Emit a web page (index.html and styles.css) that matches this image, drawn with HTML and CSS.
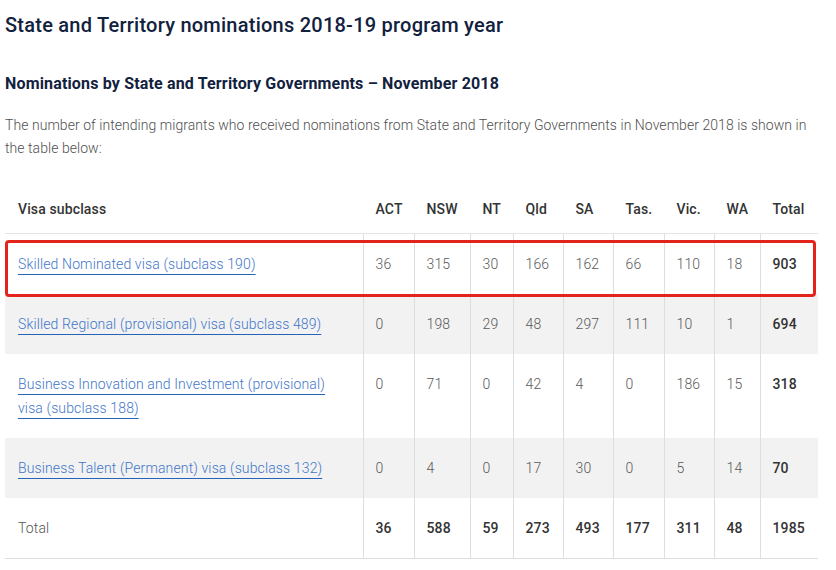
FILE: index.html
```html
<!DOCTYPE html>
<html lang="en">
<head>
<meta charset="utf-8">
<title>State and Territory nominations 2018-19 program year</title>
<link rel="stylesheet" href="styles.css">
</head>
<body>
<main class="page">
  <h1 class="title">State and Territory nominations 2018-19 program year</h1>
  <h2 class="subtitle">Nominations by State and Territory Governments – November 2018</h2>
  <p class="intro">The number of intending migrants who received nominations from State and Territory Governments in November 2018 is shown in the table below:</p>
  <div class="table-wrap">
    <table class="data">
      <colgroup>
        <col class="c-visa"><col class="c-act"><col class="c-nsw"><col class="c-nt"><col class="c-qld"><col class="c-sa"><col class="c-tas"><col class="c-vic"><col class="c-wa"><col class="c-total">
      </colgroup>
      <thead>
        <tr>
          <th>Visa subclass</th><th>ACT</th><th>NSW</th><th>NT</th><th>Qld</th><th>SA</th><th>Tas.</th><th>Vic.</th><th>WA</th><th>Total</th>
        </tr>
      </thead>
      <tbody>
        <tr>
          <td><a href="#">Skilled Nominated visa (subclass 190)</a></td>
          <td>36</td><td>315</td><td>30</td><td>166</td><td>162</td><td>66</td><td>110</td><td>18</td><td class="strong">903</td>
        </tr>
        <tr class="alt">
          <td><a href="#">Skilled Regional (provisional) visa (subclass 489)</a></td>
          <td>0</td><td>198</td><td>29</td><td>48</td><td>297</td><td>111</td><td>10</td><td>1</td><td class="strong">694</td>
        </tr>
        <tr>
          <td><a href="#">Business Innovation and Investment (provisional) visa (subclass 188)</a></td>
          <td>0</td><td>71</td><td>0</td><td>42</td><td>4</td><td>0</td><td>186</td><td>15</td><td class="strong">318</td>
        </tr>
        <tr class="alt">
          <td><a href="#">Business Talent (Permanent) visa (subclass 132)</a></td>
          <td>0</td><td>4</td><td>0</td><td>17</td><td>30</td><td>0</td><td>5</td><td>14</td><td class="strong">70</td>
        </tr>
        <tr class="total-row">
          <td class="label">Total</td>
          <td class="strong">36</td><td class="strong">588</td><td class="strong">59</td><td class="strong">273</td><td class="strong">493</td><td class="strong">177</td><td class="strong">311</td><td class="strong">48</td><td class="strong">1985</td>
        </tr>
      </tbody>
    </table>
    <div class="highlight" aria-hidden="true"></div>
  </div>
</main>
</body>
</html>
```

FILE: styles.css
```css
html, body {
  margin: 0;
  padding: 0;
  background: #ffffff;
}

body {
  font-family: Roboto, "Liberation Sans", Arial, sans-serif;
}

.page {
  width: 813px;
  padding: 13px 0 0 5px;
}

.title {
  margin: 0;
  font-size: 20px;
  line-height: 24px;
  font-weight: 500;
  letter-spacing: 0.24px;
  color: #12213d;
}

.subtitle {
  margin: 35px 0 0 0;
  font-size: 16px;
  line-height: 24px;
  font-weight: 700;
  letter-spacing: 0.16px;
  color: #12213d;
}

.intro {
  margin: 18px 0 0 0;
  font-size: 14px;
  line-height: 23px;
  font-weight: 300;
  letter-spacing: 0.05px;
  color: #4f4f4f;
}

.table-wrap {
  position: relative;
  margin-top: 24px;
}

.data {
  width: 813px;
  table-layout: fixed;
  border-collapse: collapse;
  font-size: 14px;
  line-height: 24px;
  letter-spacing: 0.13px;
}

.c-visa { width: 358px; }
.c-act { width: 51px; }
.c-nsw { width: 56px; }
.c-nt { width: 43px; }
.c-qld { width: 50px; }
.c-sa { width: 50px; }
.c-tas { width: 51px; }
.c-vic { width: 50px; }
.c-wa { width: 46px; }
.c-total { width: 58px; }

.data th {
  text-align: left;
  font-weight: 500;
  color: #333333;
  padding: 13px 0 12px 12px;
  border-bottom: 1px solid #e4e4e4;
  border-left: 1px solid transparent;
  vertical-align: top;
}

.data th:first-child,
.data td:first-child {
  padding-left: 13px;
  border-left: none;
}

.data td {
  padding: 18px 12px 18px 12px;
  vertical-align: top;
  border-left: 1px solid #dedede;
  font-weight: 300;
  color: #5a5a5a;
}

.data td:first-child {
  padding-right: 24px;
}

.data tr.alt td {
  background: #f2f2f2;
}

.data a {
  color: #3f76c9;
  font-weight: 300;
  text-decoration: underline;
  text-decoration-color: #2463b5;
  text-decoration-thickness: 1px;
  text-underline-offset: 5px;
}

.data td.strong {
  font-weight: 500;
  color: #333333;
}

.data td.label {
  color: #555555;
}

.total-row td {
  border-bottom: 1px solid #dedede;
}

.highlight {
  position: absolute;
  left: 0;
  top: 56px;
  width: 805px;
  height: 51px;
  border: 3px solid #e3241c;
  border-radius: 4px;
  pointer-events: none;
}
```
